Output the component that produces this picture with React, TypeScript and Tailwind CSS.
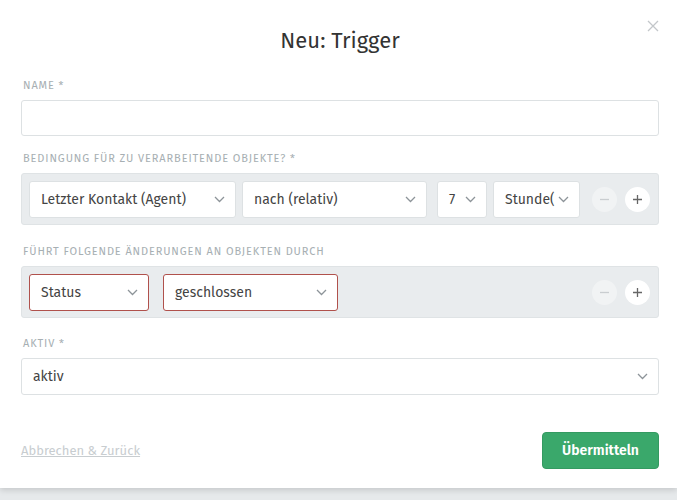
import React from 'react';

const font = { fontFamily: '"Fira Sans", Lato, "Noto Sans", sans-serif' };

const Chevron = () => (
  <svg width="11" height="7" viewBox="0 0 11 7" fill="none" className="shrink-0">
    <path d="M1 1l4.5 4.5L10 1" stroke="#8d9499" strokeWidth="1.3" />
  </svg>
);

const Select = ({ label, width, error = false }: { label: string; width: string; error?: boolean }) => (
  <div
    className={`flex items-center justify-between h-[37px] bg-white rounded-[3px] pl-[11px] pr-[10px] border ${
      error ? 'border-[#b0514c]' : 'border-[#dde1e3]'
    } ${width}`}
  >
    <span className="text-[14px] text-[#444] whitespace-nowrap">{label}</span>
    <Chevron />
  </div>
);

const Label = ({ children }: { children: React.ReactNode }) => (
  <div className="pl-[2px] text-[11px] leading-[14px] tracking-[0.08em] uppercase text-[#a7afb3] mb-[7px]">{children}</div>
);

const RoundButtons = () => (
  <div className="ml-auto flex items-center gap-[8px]">
    <div className="w-[25px] h-[25px] rounded-full bg-[#f1f3f4] flex items-center justify-center">
      <svg width="11" height="11" viewBox="0 0 11 11">
        <path d="M1 5.5h9" stroke="#c9cdd0" strokeWidth="1.3" />
      </svg>
    </div>
    <div className="w-[25px] h-[25px] rounded-full bg-white flex items-center justify-center">
      <svg width="11" height="11" viewBox="0 0 11 11">
        <path d="M1 5.5h9M5.5 1v9" stroke="#666" strokeWidth="1.3" />
      </svg>
    </div>
  </div>
);

export default function App() {
  return (
    <div className="h-[500px] bg-[#e6e9eb]" style={font}>
      <div className="relative h-[488px] bg-white shadow-[0_2px_6px_rgba(0,0,0,0.15)] pl-[21px] pr-[18px]">
        <svg width="12" height="12" viewBox="0 0 12 12" className="absolute left-[647px] top-[20px]">
          <path d="M1 1l10 10M11 1L1 11" stroke="#c3c7ca" strokeWidth="1.3" />
        </svg>
        <h1 className="pt-[26px] text-center text-[22px] leading-[30px] text-[#333]">Neu: Trigger</h1>

        <div className="mt-[23px]">
          <Label>Name *</Label>
          <div className="h-[36px] border border-[#dde1e3] rounded-[3px] bg-white" />
        </div>

        <div className="mt-[16px]">
          <Label>Bedingung für zu verarbeitende Objekte? *</Label>
          <div className="flex items-center h-[52px] bg-[#e9ecee] border border-[#dfe3e5] rounded-[3px] pl-[7px] pr-[8px]">
            <Select label="Letzter Kontakt (Agent)" width="w-[207px]" />
            <div className="w-[6px]" />
            <Select label="nach (relativ)" width="w-[185px]" />
            <div className="w-[10px]" />
            <Select label="7" width="w-[50px]" />
            <div className="w-[6px]" />
            <Select label="Stunde(" width="w-[87px]" />
            <RoundButtons />
          </div>
        </div>

        <div className="mt-[20px]">
          <Label>Führt folgende Änderungen an Objekten durch</Label>
          <div className="flex items-center h-[52px] bg-[#e9ecee] border border-[#dfe3e5] rounded-[3px] pl-[7px] pr-[8px]">
            <Select label="Status" width="w-[120px]" error />
            <div className="w-[14px]" />
            <Select label="geschlossen" width="w-[175px]" error />
            <RoundButtons />
          </div>
        </div>

        <div className="mt-[19px]">
          <Label>Aktiv *</Label>
          <div className="flex items-center justify-between h-[37px] border border-[#dde1e3] rounded-[3px] bg-white pl-[11px] pr-[10px]">
            <span className="text-[14px] text-[#444]">aktiv</span>
            <Chevron />
          </div>
        </div>

        <div className="mt-[37px] flex items-center justify-between">
          <a className="text-[13px] text-[#c8cdd0] underline">Abbrechen &amp; Zurück</a>
          <button className="h-[37px] w-[117px] rounded-[4px] bg-[#3aa86b] border border-[#349a61] text-white text-[14px] font-semibold">
            Übermitteln
          </button>
        </div>
      </div>
    </div>
  );
}
